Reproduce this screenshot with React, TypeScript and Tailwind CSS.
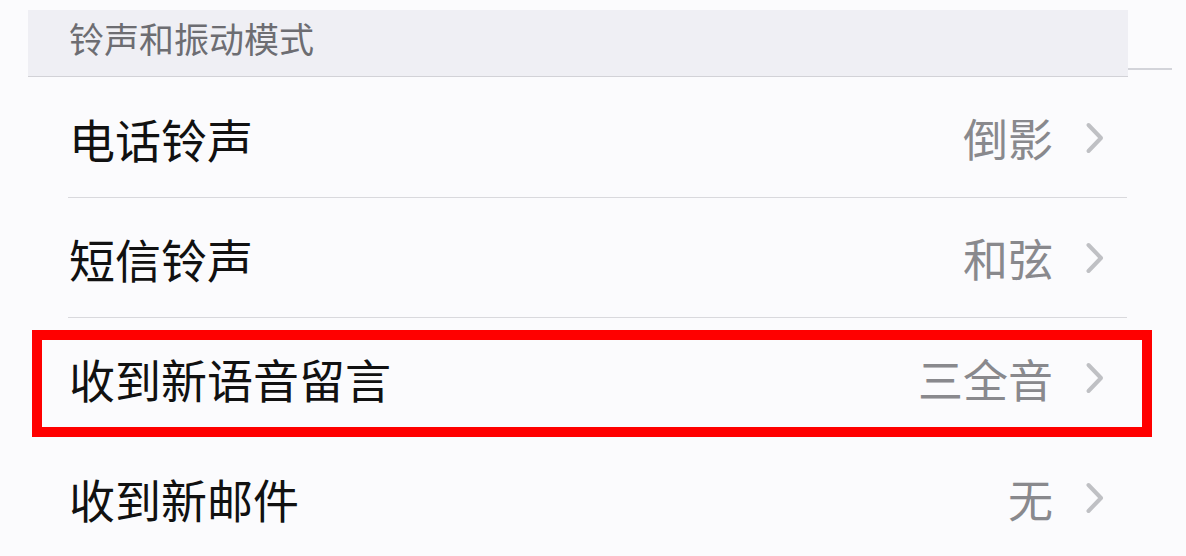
import React from 'react';

interface SettingRowProps {
  label: string;
  value: string;
  divider?: boolean;
}

const Chevron = () => (
  <svg width="20" height="32" viewBox="0 0 20 32" fill="none" className="shrink-0">
    <path d="M3.5 3 L16 16 L3.5 29" stroke="#bfc0c4" strokeWidth="4" strokeLinecap="round" strokeLinejoin="round" />
  </svg>
);

const SettingRow: React.FC<SettingRowProps> = ({ label, value, divider }) => (
  <div className={`flex h-[120px] items-center pl-[1px] pr-[22px] ${divider ? 'border-b border-[#d9d9dd]' : ''}`}>
    <span className="flex-1 text-[46px] leading-none text-[#111111]">{label}</span>
    <span className="text-[45px] leading-none text-[#89898d]">{value}</span>
    <span className="ml-[32px]">
      <Chevron />
    </span>
  </div>
);

const rows: SettingRowProps[] = [
  { label: '电话铃声', value: '倒影', divider: true },
  { label: '短信铃声', value: '和弦', divider: true },
  { label: '收到新语音留言', value: '三全音' },
  { label: '收到新邮件', value: '无' },
];

export default function App() {
  return (
    <div
      className="relative h-[556px] w-[1186px] overflow-hidden bg-[#fbfbfd] pt-[10px]"
      style={{ fontFamily: '"Noto Sans CJK SC", "Noto Sans", sans-serif' }}
    >
      <div className="flex">
        <div className="ml-[28px] flex h-[67px] w-[1100px] items-start border-b border-[#d2d2d7] bg-[#efeff4] pl-[41px] pt-[10px]">
          <span className="text-[35px] leading-none text-[#6d6d72]">铃声和振动模式</span>
        </div>
        <div className="mt-[58px] h-[2px] w-[44px] bg-[#d3d4da]" />
      </div>

      <div className="ml-[68px] mt-[1px] w-[1059px]">
        {rows.map((row) => (
          <SettingRow key={row.label} {...row} />
        ))}
      </div>

      <div className="absolute left-[32px] top-[330px] h-[107px] w-[1120px] border-[10px] border-[#ff0000]" />
    </div>
  );
}
